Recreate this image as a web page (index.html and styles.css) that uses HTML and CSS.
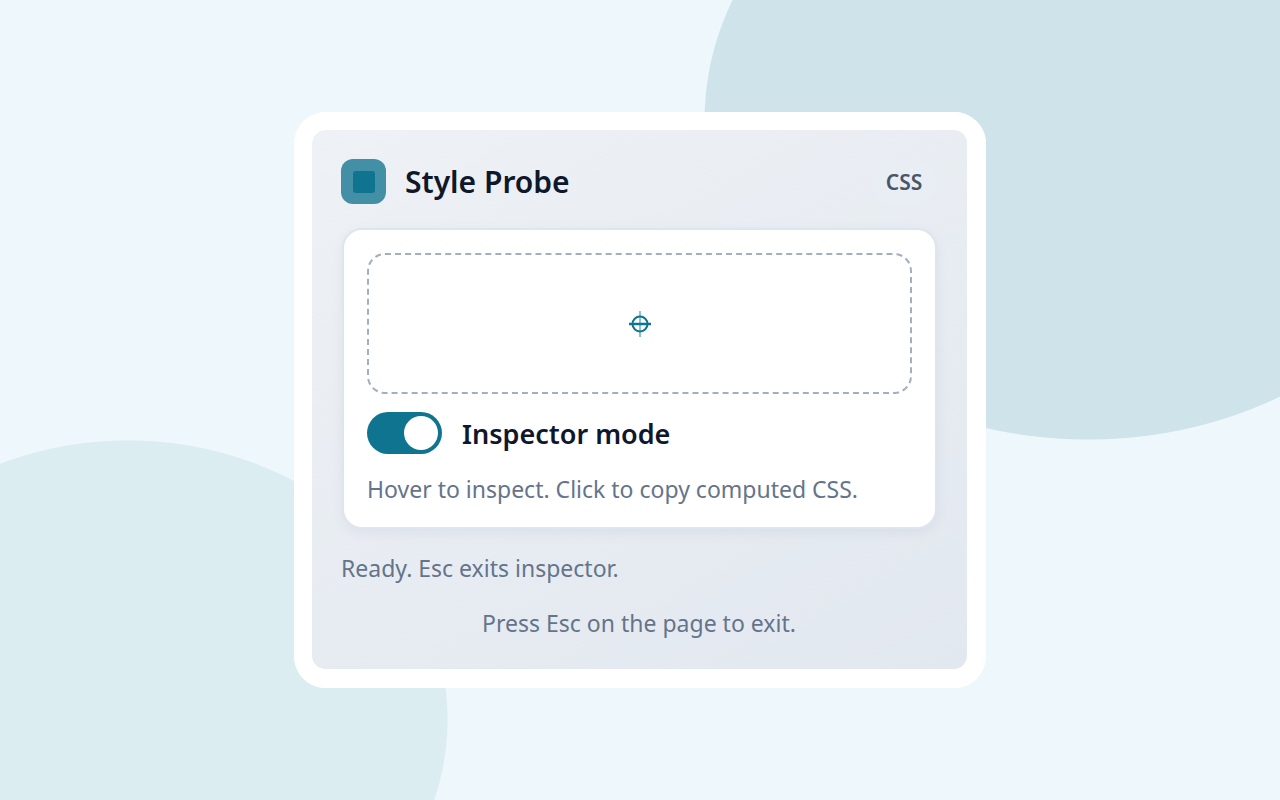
FILE: index.html
```html
<!DOCTYPE html>
<html lang="en">
<head>
<meta charset="utf-8">
<title>Style Probe</title>
<link rel="stylesheet" href="styles.css">
</head>
<body>
<main class="shell">
  <section class="popup">
    <header class="header">
      <div class="brand">
        <span class="logo"><span class="logo-core"></span></span>
        <h1 class="title">Style Probe</h1>
      </div>
      <span class="badge">CSS</span>
    </header>
    <div class="panel">
      <div class="dropzone">
        <svg class="target" viewBox="0 0 28 28" width="28" height="28" aria-hidden="true">
          <line class="target-v" x1="14" y1="1" x2="14" y2="27"/>
          <circle class="target-ring" cx="14" cy="14" r="7.5"/>
          <line class="target-h" x1="3" y1="14" x2="25" y2="14"/>
        </svg>
      </div>
      <div class="toggle-row">
        <span class="toggle"><span class="knob"></span></span>
        <span class="toggle-label">Inspector mode</span>
      </div>
      <p class="hint">Hover to inspect. Click to copy computed CSS.</p>
    </div>
    <p class="status">Ready. Esc exits inspector.</p>
    <p class="footer">Press Esc on the page to exit.</p>
  </section>
</main>
</body>
</html>
```
FILE: styles.css
```css
* { box-sizing: border-box; }
html, body { height: 100%; margin: 0; }
body {
  font-family: "Noto Sans", "Open Sans", sans-serif;
  background-color: #eef7fb;
  background-image:
    radial-gradient(384px 320px at 1088px 120px, #cfe3ea 99.7%, transparent 100%),
    radial-gradient(320px 280px at 128px 720px, #dcedf1 99.7%, transparent 100%);
  background-repeat: no-repeat;
}
.shell {
  height: 800px;
  display: flex;
  align-items: center;
  justify-content: center;
}
.popup {
  width: 692px;
  height: 576px;
  padding: 29px 30px 0 29px;
  background: linear-gradient(150deg, #eef1f5 0%, #e2e8f0 100%);
  background-clip: padding-box;
  border: 18px solid #fff;
  border-right-width: 19px;
  border-bottom-width: 19px;
  border-radius: 32px;
  position: relative;
}
.popup::before {
  content: "";
  position: absolute;
  inset: -18px -19px -19px -18px;
  border: 18px solid #fff;
  border-radius: 32px;
  pointer-events: none;
}
.header {
  display: flex;
  align-items: center;
  justify-content: space-between;
  height: 45px;
  padding-right: 0;
}
.brand { display: flex; align-items: center; gap: 19px; }
.logo {
  width: 45px;
  height: 45px;
  border-radius: 12px;
  background: #428fa6;
  display: flex;
  align-items: center;
  justify-content: center;
}
.logo-core {
  width: 22px;
  height: 22px;
  border-radius: 3px;
  background: #0f7490;
}
.title {
  margin: 0;
  font-size: 30px;
  font-weight: 600;
  line-height: 45px;
  color: #0f172a;
}
.badge {
  width: 66px;
  height: 42px;
  margin-right: 0;
  display: flex;
  align-items: center;
  justify-content: center;
  border-radius: 21px;
  background: #e9eef4;
  color: #475569;
  font-size: 21px;
  font-weight: 600;
}
.panel {
  margin: 24px 0 0 1px;
  width: 595px;
  height: 301px;
  padding: 23px 23px 0;
  background: #fff;
  border: 2px solid #dde5ee;
  border-radius: 20px;
  box-shadow: 0 4px 14px rgba(15, 23, 42, 0.05);
}
.dropzone {
  height: 141px;
  border: 2px dashed #a3afbf;
  border-radius: 18px;
  display: flex;
  align-items: center;
  justify-content: center;
}
.target-v { stroke: #8cc3d6; stroke-width: 2; }
.target-ring { fill: none; stroke: #0f7490; stroke-width: 2; }
.target-h { stroke: #0f7490; stroke-width: 2.5; }
.toggle-row {
  margin-top: 18px;
  display: flex;
  align-items: center;
  gap: 20px;
}
.toggle {
  width: 75px;
  height: 42px;
  border-radius: 21px;
  background: #0f7490;
  display: flex;
  align-items: center;
  justify-content: flex-end;
  padding-right: 4px;
}
.knob {
  width: 34px;
  height: 34px;
  border-radius: 50%;
  background: #fff;
}
.toggle-label {
  font-size: 27px;
  font-weight: 600;
  color: #0f172a;
}
.hint {
  margin: 17px 0 0;
  font-size: 23px;
  line-height: 36px;
  color: #64748b;
}
.status {
  margin: 21px 0 0;
  font-size: 23px;
  line-height: 36px;
  color: #64748b;
}
.footer {
  margin: 19px 0 0;
  text-align: center;
  font-size: 23px;
  line-height: 36px;
  color: #64748b;
}
```
